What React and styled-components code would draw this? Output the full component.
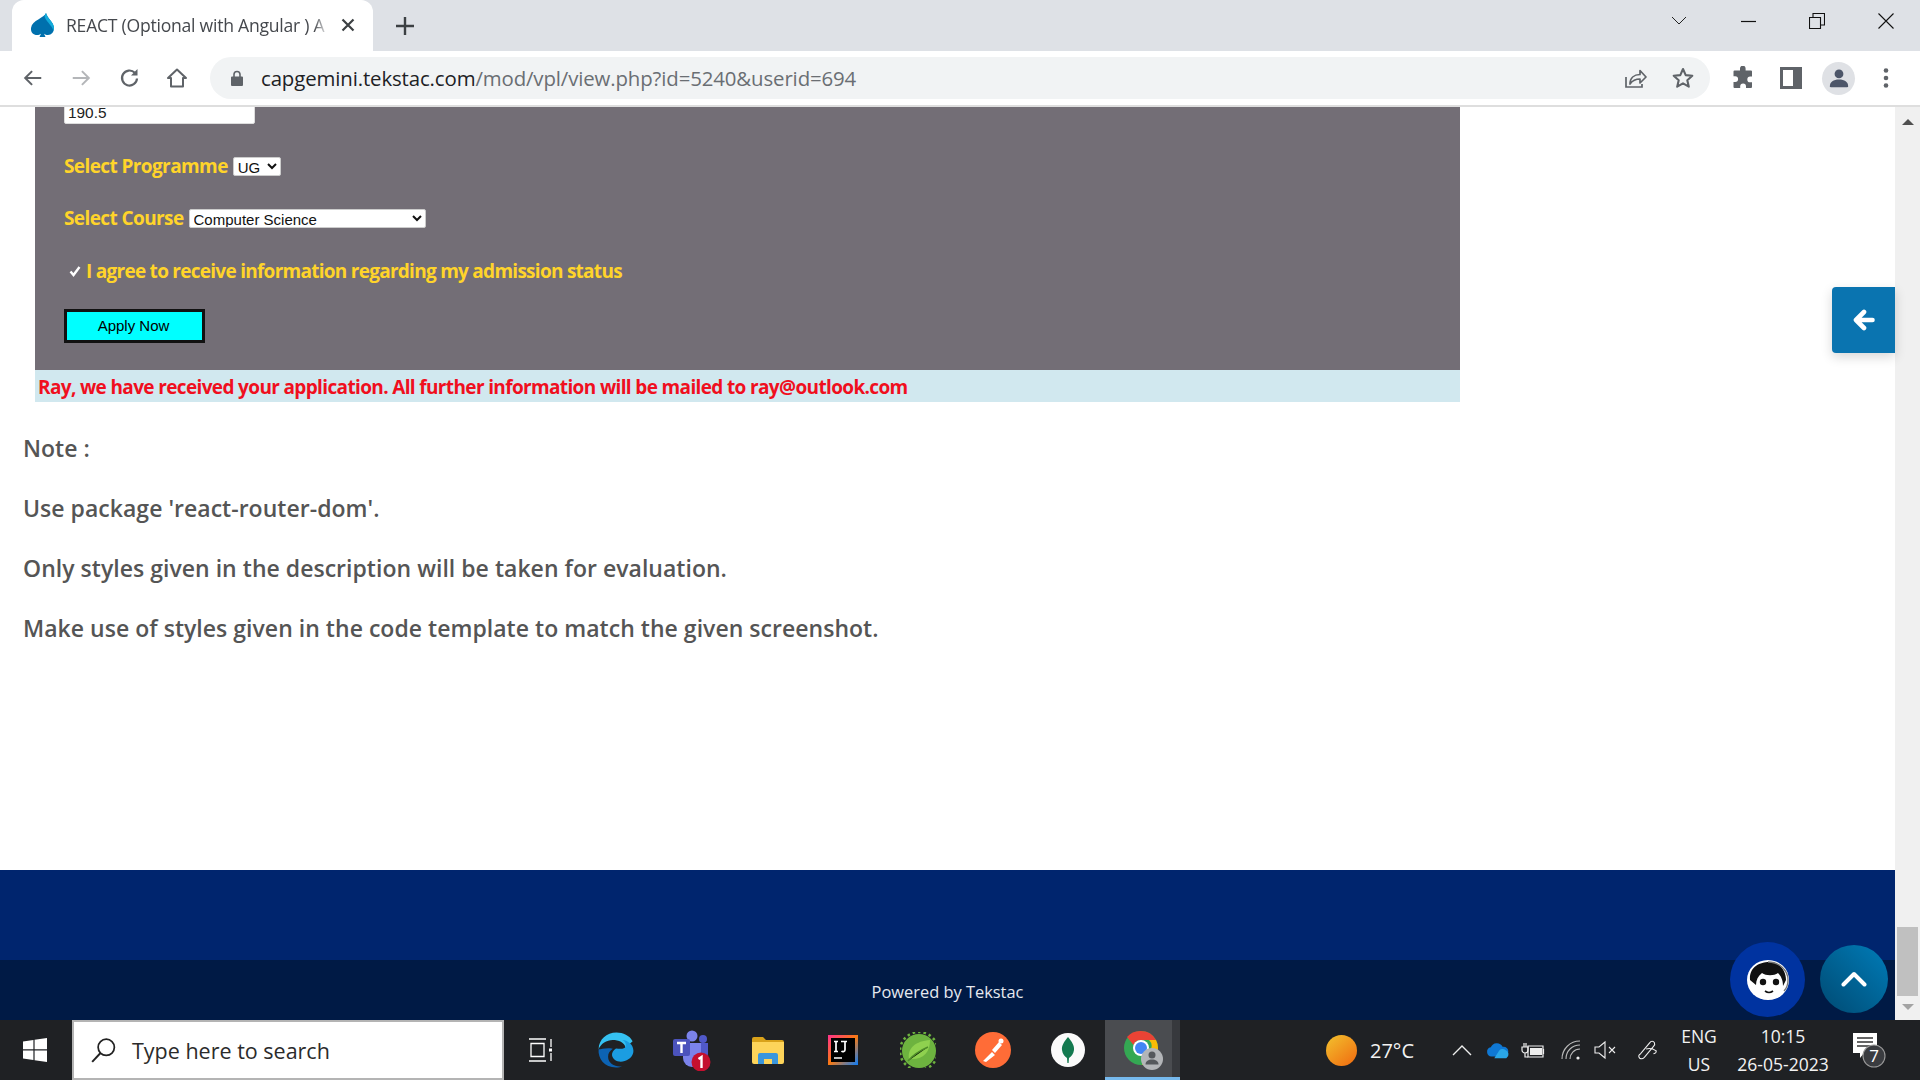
import React from "react";
import styled, { createGlobalStyle } from "styled-components";

const Global = createGlobalStyle`
  html, body { margin: 0; padding: 0; height: 100%; overflow: hidden; background: #fff; }
  #root { height: 100%; }
  * { box-sizing: border-box; }
`;

const Screen = styled.div`
  width: 1920px; height: 1080px; display: flex; flex-direction: column; overflow: hidden;
  font-family: "Open Sans", "Noto Sans", sans-serif; position: relative;
`;

/* ---------- browser chrome ---------- */
const TabStrip = styled.div`
  height: 51px; background: #dee1e6; display: flex; align-items: flex-end; padding-left: 12px; flex: none;
`;
const Tab = styled.div`
  width: 361px; height: 51px; background: #fff; border-radius: 12px 12px 0 0;
  display: flex; align-items: center; padding: 0 15px 2px 18px; position: relative;
`;
const TabTitle = styled.span`
  margin-left: 11px; width: 264px; overflow: hidden; white-space: nowrap; font-size: 17.6px; color: #45484d;
  font-family: "Open Sans", sans-serif; letter-spacing: -0.25px;
  -webkit-mask-image: linear-gradient(90deg, #000 94%, rgba(0,0,0,.25) 98%);
  mask-image: linear-gradient(90deg, #000 94%, rgba(0,0,0,.25) 98%);
`;
const TabClose = styled.span`margin-left: 11px; display: flex;`;
const NewTab = styled.span`margin: 0 0 0 22px; align-self: center; display: flex;`;
const WinControls = styled.div`
  margin-left: auto; align-self: flex-start; height: 42px; display: flex; align-items: center;
`;
const WinBtn = styled.span`width: ${p => p.$w}px; display: flex; justify-content: center;`;

const Toolbar = styled.div`
  height: 56px; background: #fff; border-bottom: 2px solid #dedede; display: flex; align-items: flex-start; padding: 6px 0 0 0; flex: none;
`;
const NavBtn = styled.span`width: 48px; height: 42px; display: flex; align-items: center; justify-content: center;`;
const NavGroup = styled.div`display: flex; padding-left: 9px; width: 210px;`;
const Omnibox = styled.div`
  width: 1500px; height: 42px; border-radius: 21px; background: #f1f3f4; display: flex; align-items: center; padding-left: 19px;
`;
const Url = styled.div`
  margin-left: 16px; font-size: 20.4px; color: #6a6e73; white-space: nowrap; letter-spacing: -0.12px; font-family: "Open Sans", sans-serif;
  b { font-weight: 400; color: #202124; }
`;
const OmniRight = styled.div`margin-left: auto; display: flex; padding-right: 3px;`;
const ToolRight = styled.div`display: flex; padding-left: 9px; align-items: center; height: 42px;`;
const Avatar = styled.span`
  width: 33px; height: 33px; border-radius: 50%; background: #dfe1e5; display: flex; align-items: center; justify-content: center; margin: 0 7px;
`;

/* ---------- page ---------- */
const Viewport = styled.div`flex: 1; display: flex; min-height: 0; position: relative;`;
const Page = styled.div`flex: 1; display: flex; flex-direction: column; min-width: 0; overflow: hidden;`;
const Content = styled.main`flex: 1; min-height: 0; padding: 0 0 0 23px; overflow: hidden;`;
const FormPanel = styled.section`
  margin: 0 0 0 12px; width: 1425px; height: 263px; background: #736e76; padding: 0 0 0 29px; color: #ffd42a; overflow: hidden;
`;
const HeightInput = styled.input`
  display: block; width: 191px; height: 26px; margin-top: -9px; border: 1px solid #ddd; border-radius: 2px; background: #fff; padding: 3px 3px 0;
  font: 15.4px "Liberation Sans", Arial, sans-serif; color: #222;
`;
const Field = styled.div`
  display: flex; align-items: center; margin-top: ${p => p.$mt}px; font-size: 19px; font-weight: 700; height: 24px; letter-spacing: ${p => p.$ls || "-0.6px"}; white-space: nowrap;
`;
const NativeSelect = styled.select`
  margin: 1px 0 0 ${p => p.$ml}px; width: ${p => p.$w}px; height: 19px; font: 15px "Liberation Sans", Arial, sans-serif; background: #fff; color: #111;
  border: 1px solid #ccc; border-radius: 2px; padding: 0; letter-spacing: 0;
`;
const CheckMark = styled.span`display: flex; margin: 0 5px 0 5px;`;
const ApplyButton = styled.button`
  display: block; margin-top: 26px; width: 141px; height: 34px; background: #00ffff; border: 3px solid #111; color: #000;
  font: 15px "Liberation Sans", Arial, sans-serif; padding: 0 2px 2px 0;
`;
const Confirmation = styled.div`
  margin-left: 12px; width: 1425px; height: 32px; background: #d1e8ef; color: #f00f1e; font-weight: 700; font-size: 19px; display: flex; align-items: center;
  padding: 1px 0 0 3px; letter-spacing: -0.64px; white-space: nowrap;
`;
const Notes = styled.div`
  margin-top: 30px; color: #555; font-weight: 600; font-size: 23px; letter-spacing: 0.03px; line-height: 32px; display: flex; flex-direction: column; gap: 28px;
`;
const FooterTop = styled.div`height: 90px; background: #00256e; flex: none;`;
const FooterBottom = styled.footer`
  height: 60px; background: #001a45; color: #e6e9ef; font-size: 16.4px; display: flex; align-items: center; justify-content: center; flex: none; padding-top: 2px;
`;

const Scrollbar = styled.div`width: 25px; background: #f0f0f0; display: flex; flex-direction: column; align-items: center; flex: none; position: relative;`;
const ScrollUp = styled.span`
  margin-top: 12px; width: 0; height: 0; border-left: 6px solid transparent; border-right: 6px solid transparent; border-bottom: 6px solid #505050;
`;
const ScrollSpacer = styled.div`flex: 1;`;
const ScrollThumb = styled.div`width: 21px; height: 69px; background: #c0c0c0;`;
const ScrollDown = styled.span`
  margin: 8px 0 10px; width: 0; height: 0; border-left: 6px solid transparent; border-right: 6px solid transparent; border-top: 6px solid #a3a3a3;
`;

const SideTab = styled.button`
  position: absolute; right: 25px; top: 180px; width: 63px; height: 66px; background: #0a74b0; border: 0; border-radius: 4px 0 0 4px;
  color: #fff; display: flex; align-items: center; justify-content: center; box-shadow: 0 4px 12px rgba(0,0,0,.16); padding: 0;
`;
const ChatBubble = styled.div`
  position: absolute; left: 1730px; top: 835px; width: 75px; height: 75px; border-radius: 50%; background: #0033a0; display: flex; align-items: center; justify-content: center;
`;
const TopBubble = styled.div`
  position: absolute; left: 1820px; top: 838px; width: 68px; height: 68px; border-radius: 50%;
  background: linear-gradient(45deg, #004a72, #007cb8); display: flex; align-items: center; justify-content: center;
`;

/* ---------- taskbar ---------- */
const Taskbar = styled.div`height: 60px; background: #1f2124; display: flex; align-items: stretch; flex: none; color: #fff;`;
const StartBtn = styled.div`width: 72px; display: flex; align-items: center; justify-content: center; padding-right: 2px;`;
const Search = styled.div`
  width: 432px; background: #fff; border: 2px solid #b4b4b4; display: flex; align-items: center; padding-left: 16px; color: #2b2b2b; font-size: 21.5px;
  span { margin-left: 16px; }
`;
const Slot = styled.div`
  width: ${p => p.$w || 75}px; display: flex; align-items: center; justify-content: center; position: relative;
  ${p => p.$active && `background: linear-gradient(90deg, #4a4c50 0 67px, #37393d 67px); box-shadow: inset 0 -3px 0 #76b9ed;`}
`;
const Tray = styled.div`margin-left: auto; padding-right: 22px; display: flex; align-items: center; height: 100%;`;
const TrayIcon = styled.span`width: ${p => p.$w}px; display: flex; justify-content: center; align-items: center;`;
const Temp = styled.span`font-size: 20px; width: 81px; text-align: left; padding-left: 13px; color: #f2f2f2;`;
const TwoLine = styled.div`
  width: ${p => p.$w}px; text-align: center; font-size: 17.5px; line-height: 28px; color: #f2f2f2; display: flex; flex-direction: column; white-space: nowrap;
`;
const Orb = styled.span`width: 31px; height: 31px; border-radius: 50%; background: linear-gradient(140deg, #f2c22e, #f0690f);`;

/* ---------- drawings ---------- */
const Ic = ({ s = 24, w, h, vb, children, ...r }) => (
  <svg width={w || s} height={h || s} viewBox={vb || "0 0 24 24"} fill="none" {...r}>{children}</svg>
);

const CapLogo = () => (
  <Ic w={25} h={24} vb="0 0 25 24">
    <path d="M16 0C14.500 5 2 7 1 15c-.5 4.500 2.500 7 6 7 1.500 0 3-.5 4-1.300L9.500 24h6l-1.500-3.300c1 .8 2.400 1.300 4 1.300 3.500 0 6-3 6-7C24 9 17.500 6 16 0z" fill="#0070ad" />
    <path d="M16 0c1.500 6 8 9 8 15 0 1-.2 2-.5 2.900C22 12 15 8 14.500 3z" fill="#12abdb" />
  </Ic>
);

const Win = () => (
  <Ic w={24} h={24} vb="0 0 24 24"><path d="M0 3.400 10.400 2v9.300H0zM11.600 1.800 24 0v11.300H11.600zM0 12.600h10.400V22L0 20.600zM11.600 12.600H24V24l-12.400-1.800z" fill="#fff" /></Ic>
);

const Face = () => (
  <svg width="42" height="40" viewBox="0 0 42 40">
    <ellipse cx="21" cy="20" rx="21" ry="20" fill="#fff" />
    <path d="M3 20C2 7 13 2 22 2c10 0 17 8 17 18l-3 6c0-6-2-10-5-13-4 3-12 3-16 0-4 3-6 7-6 12z" fill="#111" />
    <path d="M21 2c11 0 20 8 20 18 0 4-1 8-4 11" stroke="#777" strokeWidth="1.300" fill="none" />
    <circle cx="16" cy="22" r="3.200" fill="#111" /><circle cx="29" cy="22" r="3.200" fill="#111" />
    <path d="M18 31q4 3 8 0" stroke="#111" strokeWidth="1.600" fill="none" />
  </svg>
);

export default function App() {
  return (
    <Screen>
      <Global />
      <TabStrip>
        <Tab>
          <CapLogo />
          <TabTitle>REACT (Optional with Angular ) A</TabTitle>
          <TabClose><Ic s={14} vb="0 0 14 14"><path d="M1.500 1.500l11 11M12.500 1.500l-11 11" stroke="#3c4043" strokeWidth="2.200" /></Ic></TabClose>
        </Tab>
        <NewTab><Ic s={20} vb="0 0 20 20"><path d="M10 1v18M1 10h18" stroke="#3c4043" strokeWidth="2.400" /></Ic></NewTab>
        <WinControls>
          <WinBtn $w={70}><Ic w={16} h={10} vb="0 0 16 10"><path d="M1 1l7 7 7-7" stroke="#222" strokeWidth="1" /></Ic></WinBtn>
          <WinBtn $w={68}><Ic w={15} h={3} vb="0 0 15 3"><path d="M0 1.500h15" stroke="#111" strokeWidth="1.200" /></Ic></WinBtn>
          <WinBtn $w={69}><Ic s={16} vb="0 0 16 16"><path d="M.5 4.500h11v11H.5zM4 4.500V.5h11.500V12h-4" stroke="#111" strokeWidth="1.100" /></Ic></WinBtn>
          <WinBtn $w={69}><Ic s={16} vb="0 0 16 16"><path d="M.5.5l15 15M15.500.5l-15 15" stroke="#111" strokeWidth="1.100" /></Ic></WinBtn>
        </WinControls>
      </TabStrip>
      <Toolbar>
        <NavGroup>
          <NavBtn><Ic s={22}><path d="M21 12H4M11 4.500 3.500 12l7.500 7.500" stroke="#5f6368" strokeWidth="2.200" /></Ic></NavBtn>
          <NavBtn><Ic s={22}><path d="M3 12h17M13 4.500l7.500 7.500-7.500 7.500" stroke="#b4b6b9" strokeWidth="2.200" /></Ic></NavBtn>
          <NavBtn><Ic s={24} vb="-1 0 24 24"><path d="M19 12.500A7.500 7.500 0 1 1 16.800 6.700" stroke="#5f6368" strokeWidth="2.200" /><path d="M19.500 3v6.500H13z" fill="#5f6368" /></Ic></NavBtn>
          <NavBtn><Ic s={24}><path d="M12 3.500 3 12h3v8.500h12V12h3z" stroke="#5f6368" strokeWidth="2" strokeLinejoin="round" /></Ic></NavBtn>
        </NavGroup>
        <Omnibox>
          <Ic s={16} vb="0 0 16 16"><path d="M3 6.500h10a1 1 0 0 1 1 1V15a1 1 0 0 1-1 1H3a1 1 0 0 1-1-1V7.500a1 1 0 0 1 1-1z" fill="#5f6368" /><path d="M5 7V4.500a3 3 0 0 1 6 0V7" stroke="#5f6368" strokeWidth="1.600" /></Ic>
          <Url><b>capgemini.tekstac.com</b>/mod/vpl/view.php?id=5240&amp;userid=694</Url>
          <OmniRight>
            <NavBtn><Ic s={24}><path d="M3 11v10h16v-3" stroke="#5f6368" strokeWidth="1.700" /><path d="M7 18c0-6 4-9.500 10-9.500V4.500l6 6.500-6 6v-4c-4.500 0-7.500 1.500-10 5z" stroke="#5f6368" strokeWidth="1.700" strokeLinejoin="round" /></Ic></NavBtn>
            <NavBtn><Ic s={24}><path d="M12 3l2.700 6.100 6.600.7-5 4.400 1.500 6.500L12 17.300 6.200 20.700l1.500-6.500-5-4.400 6.600-.7z" stroke="#5f6368" strokeWidth="2.100" strokeLinejoin="round" /></Ic></NavBtn>
          </OmniRight>
        </Omnibox>
        <ToolRight>
          <NavBtn><Ic s={24}><path d="M9 2.500a2.800 2.800 0 0 1 5.600 0V4.500H20a1 1 0 0 1 1 1v5h-1.800a2.900 2.900 0 0 0 0 5.800H21V21a1 1 0 0 1-1 1h-5v-1.700a2.900 2.900 0 0 0-5.800 0V22H3.500a1 1 0 0 1-1-1v-5h1.700a2.900 2.900 0 0 0 0-5.800H2.500v-4.700a1 1 0 0 1 1-1H9z" fill="#5f6368" /></Ic></NavBtn>
          <NavBtn><Ic w={22} h={22} vb="0 0 22 22"><path d="M0 0h22v22H0z" fill="#5f6368" /><path d="M3 3h10v16H3z" fill="#fff" /></Ic></NavBtn>
          <Avatar><Ic s={22}><circle cx="12" cy="7.500" r="4.800" fill="#4d5669" /><path d="M2 21c0-5 4-7.500 10-7.500S22 16 22 21c0 .8-.4 1-1 1H3c-.6 0-1-.2-1-1z" fill="#4d5669" /></Ic></Avatar>
          <NavBtn><Ic w={6} h={20} vb="0 0 6 20"><circle cx="3" cy="2.500" r="2.300" fill="#5f6368" /><circle cx="3" cy="10" r="2.300" fill="#5f6368" /><circle cx="3" cy="17.500" r="2.300" fill="#5f6368" /></Ic></NavBtn>
        </ToolRight>
      </Toolbar>

      <Viewport>
        <Page>
          <Content>
            <FormPanel>
              <HeightInput readOnly value="190.5" />
              <Field $mt={30}>
                Select Programme
                <NativeSelect $ml={5} $w={48} defaultValue="UG"><option>UG</option></NativeSelect>
              </Field>
              <Field $mt={28}>
                Select Course
                <NativeSelect $ml={5} $w={237} defaultValue="Computer Science"><option>Computer Science</option></NativeSelect>
              </Field>
              <Field $mt={29} $ls="-0.73px">
                <CheckMark><Ic w={12} h={12} vb="0 0 12 12"><path d="M1.500 6.500 4.500 10 10.500 2" stroke="#fff" strokeWidth="2.400" /></Ic></CheckMark>
                I agree to receive information regarding my admission status
              </Field>
              <ApplyButton>Apply Now</ApplyButton>
            </FormPanel>
            <Confirmation>Ray, we have received your application. All further information will be mailed to ray@outlook.com</Confirmation>
            <Notes>
              <div>Note :</div>
              <div>Use package 'react-router-dom'.</div>
              <div>Only styles given in the description will be taken for evaluation.</div>
              <div>Make use of styles given in the code template to match the given screenshot.</div>
            </Notes>
          </Content>
          <FooterTop />
          <FooterBottom>Powered by Tekstac</FooterBottom>
        </Page>
        <Scrollbar>
          <ScrollUp />
          <ScrollSpacer />
          <ScrollThumb />
          <ScrollDown />
        </Scrollbar>
        <SideTab aria-label="back"><Ic w={22} h={22} vb="0 0 22 22"><path d="M19.500 11H4M11 3 3 11l8 8" stroke="#fff" strokeWidth="4.600" strokeLinecap="round" strokeLinejoin="round" /></Ic></SideTab>
        <ChatBubble><Face /></ChatBubble>
        <TopBubble><Ic w={26} h={16} vb="0 0 26 16"><path d="M2.500 13.500 13 3l10.500 10.500" stroke="#fff" strokeWidth="4" strokeLinecap="round" strokeLinejoin="round" /></Ic></TopBubble>
      </Viewport>

      <Taskbar>
        <StartBtn><Win /></StartBtn>
        <Search>
          <Ic s={26}><circle cx="15" cy="9.500" r="7.500" stroke="#222" strokeWidth="1.600" /><path d="M9.500 15 2 23" stroke="#222" strokeWidth="1.800" /></Ic>
          <span>Type here to search</span>
        </Search>
        <Slot $w={72}>
          <Ic w={25} h={24} vb="0 0 25 24"><path d="M1 1h17M1 23h17M3 5.500h13v13H3zM23 1v8M23 15v8" stroke="#fff" strokeWidth="1.300" /><path d="M21 10.500h3v3h-3z" fill="#fff" /></Ic>
        </Slot>
        <Slot $w={79}>
          <Ic s={38}>
            <path d="M22.500 6.500C20.500 2.800 16.500 1 12.300 1 6 1 1.200 5.300 1 11.500c1.500-3.500 5-5.800 9-5.800 3.500 0 7.500 1.500 8 4.800z" fill="#35c1f1" />
            <path d="M1 11.500c-.5 6 3.800 11.500 11 11.500 1.500 0 3-.3 4-.8-4 .8-9-1.500-9-6 0-2.200 1-3.500 3-5-4-1-8 .5-9 .3z" fill="#0c63b4" />
            <path d="M23 12.500c0-3.500-3-6.500-7-6.800 2 1 2.500 2.600 2 4.300-.5 1.400-3 1.500-6 1-1.800 1.200-2.800 2.800-2.500 4.500.6 3 4.200 4.800 8 3.500 3.500-1.200 5.500-3.500 5.500-6.500z" fill="#1b9de2" />
          </Ic>
        </Slot>
        <Slot>
          <svg width="40" height="42" viewBox="0 0 40 42">
            <circle cx="19" cy="7" r="5.500" fill="#7b83eb" /><circle cx="30" cy="10" r="4" fill="#5059c9" />
            <path d="M25 14h10v11a5 5 0 0 1-10 0z" fill="#5059c9" /><path d="M10 14h18v15a9 9 0 0 1-18 0z" fill="#7b83eb" />
            <rect x="0" y="10" width="17" height="17" rx="2" fill="#4b53bc" />
            <path d="M4 14h9M8.500 14v10" stroke="#fff" strokeWidth="2.400" />
            <circle cx="28" cy="33" r="9.500" fill="#c4102f" />
            <path d="M25.500 30l3-2v11" stroke="#fff" strokeWidth="2.400" fill="none" />
          </svg>
        </Slot>
        <Slot>
          <svg width="32" height="27" viewBox="0 0 32 27">
            <path d="M0 2a2 2 0 0 1 2-2h9l3 3h16a2 2 0 0 1 2 2v3H0z" fill="#d9a21a" />
            <path d="M0 5h32v20a2 2 0 0 1-2 2H2a2 2 0 0 1-2-2z" fill="#fdd45a" />
            <path d="M6 27v-9a2 2 0 0 1 2-2h16a2 2 0 0 1 2 2v9h-6v-5h-8v5z" fill="#3a96dd" />
          </svg>
        </Slot>
        <Slot>
          <svg width="30" height="30" viewBox="0 0 30 30">
            <defs><linearGradient id="ij" x1="0" y1="0" x2="1" y2="1"><stop offset="0" stopColor="#ff318c" /><stop offset=".5" stopColor="#f97a12" /><stop offset="1" stopColor="#087cfa" /></linearGradient></defs>
            <rect width="30" height="30" fill="url(#ij)" /><rect x="3" y="3" width="24" height="24" fill="#000" />
            <path d="M6 6.500h4M8 6.500v10M6 16.500h4M13 6.500h6M17 6.500v8a2 2 0 0 1-3.500 1.500M6 23h8" stroke="#fff" strokeWidth="1.700" fill="none" />
          </svg>
        </Slot>
        <Slot>
          <svg width="36" height="36" viewBox="0 0 36 36">
            <circle cx="19" cy="19" r="17" fill="#6db33f" /><circle cx="19" cy="19" r="19" fill="none" stroke="#6db33f" strokeWidth="2.500" strokeDasharray="2.500 3" />
            <path d="M9 27C7 16 16 9 30 8c0 12-6 20-21 19z" fill="#8fd14f" /><path d="M8 29c5-6 11-10 20-14" stroke="#4f8e2a" strokeWidth="1.500" />
          </svg>
        </Slot>
        <Slot>
          <svg width="36" height="36" viewBox="0 0 36 36">
            <circle cx="18" cy="18" r="18" fill="#ff6c37" />
            <path d="M8 29l9-9 3 3-9 7zM17 18l7-8 3 3-7 8z" fill="#fff" /><circle cx="26" cy="9" r="2.500" fill="#fff" />
          </svg>
        </Slot>
        <Slot>
          <svg width="34" height="34" viewBox="0 0 34 34">
            <circle cx="17" cy="17" r="17" fill="#fafafa" />
            <path d="M17 4c4 5 6.500 8.500 6 13-.4 4-3 6.500-5 8l-.4 5h-1.200l-.4-5c-2-1.500-4.600-4-5-8-.5-4.500 2-8 6-13z" fill="#13794f" />
          </svg>
        </Slot>
        <Slot $active $w={75}>
          <svg width="40" height="40" viewBox="0 0 40 40">
            <circle cx="18" cy="18" r="17" fill="#34a853" />
            <path d="M18 1a17 17 0 0 1 15 9H18a8 8 0 0 0-7.500 5L4 7A17 17 0 0 1 18 1z" fill="#ea4335" />
            <path d="M33 10a17 17 0 0 1-14 25l7-13a8 8 0 0 0 0-12z" fill="#fbbc05" />
            <circle cx="18" cy="18" r="8" fill="#fff" /><circle cx="18" cy="18" r="6" fill="#4285f4" />
            <circle cx="29" cy="29" r="11" fill="#b3b5b8" /><circle cx="29" cy="25" r="3.500" fill="#55585c" /><path d="M22.500 34.500c0-3.500 3-5 6.500-5s6.500 1.500 6.500 5z" fill="#55585c" />
          </svg>
        </Slot>
        <Tray>
          <TrayIcon $w={31}><Orb /></TrayIcon>
          <Temp>27°C</Temp>
          <TrayIcon $w={48}><Ic w={20} h={12} vb="0 0 20 12"><path d="M1 11l9-9 9 9" stroke="#eee" strokeWidth="1.400" /></Ic></TrayIcon>
          <TrayIcon $w={24}><Ic w={26} h={18} vb="0 0 26 18"><path d="M6 16a5 5 0 0 1-.8-9.900A7 7 0 0 1 18 5.500a5 5 0 0 1 3 .2A5.500 5.500 0 0 1 20 16z" fill="#0f78d4" /><path d="M9 18l5-8a5 5 0 0 1 7-1 5 5 0 0 1 1 9z" fill="#2aa7e8" /></Ic></TrayIcon>
          <TrayIcon $w={46}><Ic w={24} h={18} vb="0 0 24 18"><path d="M7 5h15v11H7zM22.500 8v5" stroke="#eee" strokeWidth="1.200" /><path d="M9 7h12v7H9z" fill="#eee" /><path d="M1 6h6v3a3 3 0 0 1-6 0zM3 6V2M5 6V2M4 12v4h3" stroke="#eee" strokeWidth="1.200" fill="none" /></Ic></TrayIcon>
          <TrayIcon $w={30}><Ic w={20} h={20} vb="0 0 20 20"><path d="M1 19C1 9 9 1 19 1M5 19c0-8 6-14 14-14M9 19c0-5 4-10 10-10" stroke="#bbb" strokeWidth="1.100" /><circle cx="17" cy="18" r="1.600" fill="#eee" /></Ic></TrayIcon>
          <TrayIcon $w={38}><Ic w={22} h={20} vb="0 0 22 20"><path d="M1 7h4l6-5v16l-6-5H1z" stroke="#eee" strokeWidth="1.100" /><path d="M15 7l6 6M21 7l-6 6" stroke="#eee" strokeWidth="1.100" /></Ic></TrayIcon>
          <TrayIcon $w={48}><Ic s={22}><path d="M3 21c-2-2-1-4 1-5l10-12c1-2 4-2 5 0s0 3-1 4L8 20c-1 1-3 2-5 1zM10 11c3-1 8 0 11 2 0 2-2 3-3 3" stroke="#eee" strokeWidth="1.200" /></Ic></TrayIcon>
          <TwoLine $w={54}><span>ENG</span><span>US</span></TwoLine>
          <TwoLine $w={114}><span>10:15</span><span>26-05-2023</span></TwoLine>
          <TrayIcon $w={58}>
            <Ic w={34} h={36} vb="0 0 34 36"><path d="M1 1h24v20H12l-4 5v-5H1z" fill="#fff" /><path d="M5 6h16M5 10h16M5 14h16" stroke="#333" strokeWidth="1.300" /><circle cx="22" cy="24" r="11" fill="#3a3c40" stroke="#999" strokeWidth="1.100" /><text x="22" y="30" textAnchor="middle" fontSize="17" fontFamily="Open Sans, sans-serif" fill="#fff">7</text></Ic>
          </TrayIcon>
        </Tray>
      </Taskbar>
    </Screen>
  );
}
